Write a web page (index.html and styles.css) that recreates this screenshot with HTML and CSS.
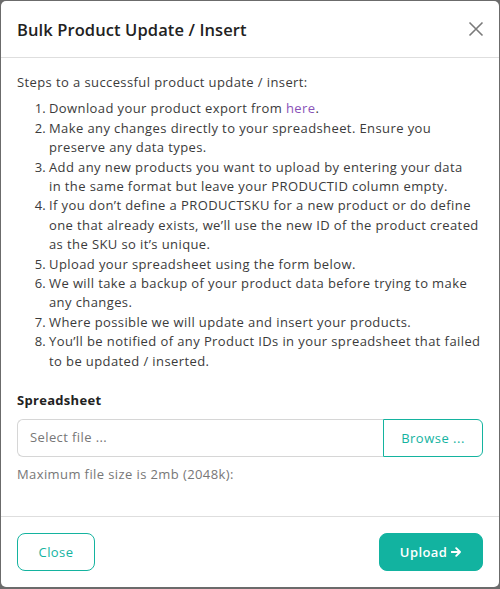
FILE: index.html
```html
<!DOCTYPE html>
<html>
<head>
<meta charset="utf-8">
<link rel="stylesheet" href="styles.css">
</head>
<body>
<div class="modal">
  <div class="modal-header">
    <h2 class="modal-title">Bulk Product Update / Insert</h2>
    <button class="close-x" aria-label="Close">
      <svg width="16" height="16" viewBox="0 0 16 16"><path d="M1.5 1.5 L14.5 14.5 M14.5 1.5 L1.5 14.5" stroke="#7a7a7a" stroke-width="1.6" fill="none"/></svg>
    </button>
  </div>
  <div class="modal-body">
    <p class="intro">Steps to a successful product update / insert:</p>
    <ol class="steps">
      <li>Download your product export from <a href="#">here</a>.</li>
      <li>Make any changes directly to your spreadsheet. Ensure you preserve any data types.</li>
      <li>Add any new products you want to upload by entering your data <span class="nw">in the</span> same format but leave your PRODUCTID column empty.</li>
      <li>If you don’t define a PRODUCTSKU for a new product or do define one that already exists, we’ll use the new ID of the product created as the SKU so it’s unique.</li>
      <li>Upload your spreadsheet using the form below.</li>
      <li>We will take a backup of your product data before trying to make any changes.</li>
      <li>Where possible we will update and insert your products.</li>
      <li>You’ll be notified of any Product IDs in your spreadsheet that failed to be updated / inserted.</li>
    </ol>
    <label class="field-label">Spreadsheet</label>
    <div class="file-group">
      <div class="file-input">Select file ...</div>
      <button class="browse">Browse ...</button>
    </div>
    <p class="help">Maximum file size is 2mb (2048k):</p>
  </div>
  <div class="modal-footer">
    <button class="btn btn-outline">Close</button>
    <button class="btn btn-primary">Upload <svg class="arrow" width="11" height="10" viewBox="0 0 11 10"><path d="M0.5 5 H9 M5.2 1.2 L9 5 L5.2 8.8" stroke="#fff" stroke-width="1.9" fill="none" stroke-linecap="round" stroke-linejoin="round"/></svg></button>
  </div>
</div>
</body>
</html>
```
FILE: styles.css
```css
html, body {
  margin: 0;
  padding: 0;
}
body {
  background: #6b6b6b;
  padding: 1px 1px 2px 1px;
  font-family: "Open Sans", "Liberation Sans", sans-serif;
  color: #3b3b3b;
}
.modal {
  background: #fff;
  border-radius: 5px;
  height: 586px;
  display: flex;
  flex-direction: column;
}
.modal-header {
  height: 56px;
  border-bottom: 1px solid #dedede;
  display: flex;
  align-items: center;
  justify-content: space-between;
  padding: 0 15px 0 16px;
}
.modal-title {
  margin: 0;
  font-size: 16.5px;
  font-weight: 600;
  color: #222;
  letter-spacing: 0.1px;
}
.close-x {
  border: 0;
  background: none;
  padding: 0;
  width: 16px;
  height: 16px;
  display: flex;
}
.modal-body {
  flex: 1;
  padding: 15px 16px 0 16px;
  font-size: 13px;
  line-height: 19.4px;
  letter-spacing: 0.4px;
}
.intro {
  margin: 0 0 7px 0;
}
.steps {
  margin: 0 0 20px 0;
  padding-left: 32px;
}
.steps li::marker {
  letter-spacing: 0;
}
.nw {
  white-space: nowrap;
}
.steps a {
  color: #8a52b8;
  text-decoration: none;
}
.field-label {
  display: block;
  font-weight: 700;
  color: #222;
  margin-bottom: 8px;
  letter-spacing: 0.3px;
}
.file-group {
  display: flex;
  height: 38px;
}
.file-input {
  flex: 1;
  border: 1px solid #d6d6d6;
  border-right: 0;
  border-radius: 6px 0 0 6px;
  display: flex;
  align-items: center;
  padding-left: 12px;
  color: #777;
}
.browse {
  width: 100px;
  border: 1px solid #14b39f;
  border-radius: 0 6px 6px 0;
  background: #fff;
  color: #14b39f;
  font-family: inherit;
  font-size: 13px;
  letter-spacing: 0.5px;
}
.help {
  margin: 8px 0 0 0;
  color: #777;
}
.modal-footer {
  border-top: 1px solid #dedede;
  padding: 16px 16px 16px 16px;
  display: flex;
  justify-content: space-between;
}
.btn {
  height: 38px;
  border-radius: 8px;
  font-family: inherit;
  font-size: 13px;
  padding: 0;
  letter-spacing: 0.4px;
}
.btn-outline {
  width: 78px;
  background: #fff;
  border: 1px solid #14b39f;
  color: #14b39f;
}
.btn-primary {
  width: 104px;
  background: #12b3a0;
  border: 1px solid #12b3a0;
  color: #fff;
  font-weight: 600;
  display: flex;
  align-items: center;
  justify-content: center;
  gap: 4px;
}
.arrow {
  display: block;
}
```
